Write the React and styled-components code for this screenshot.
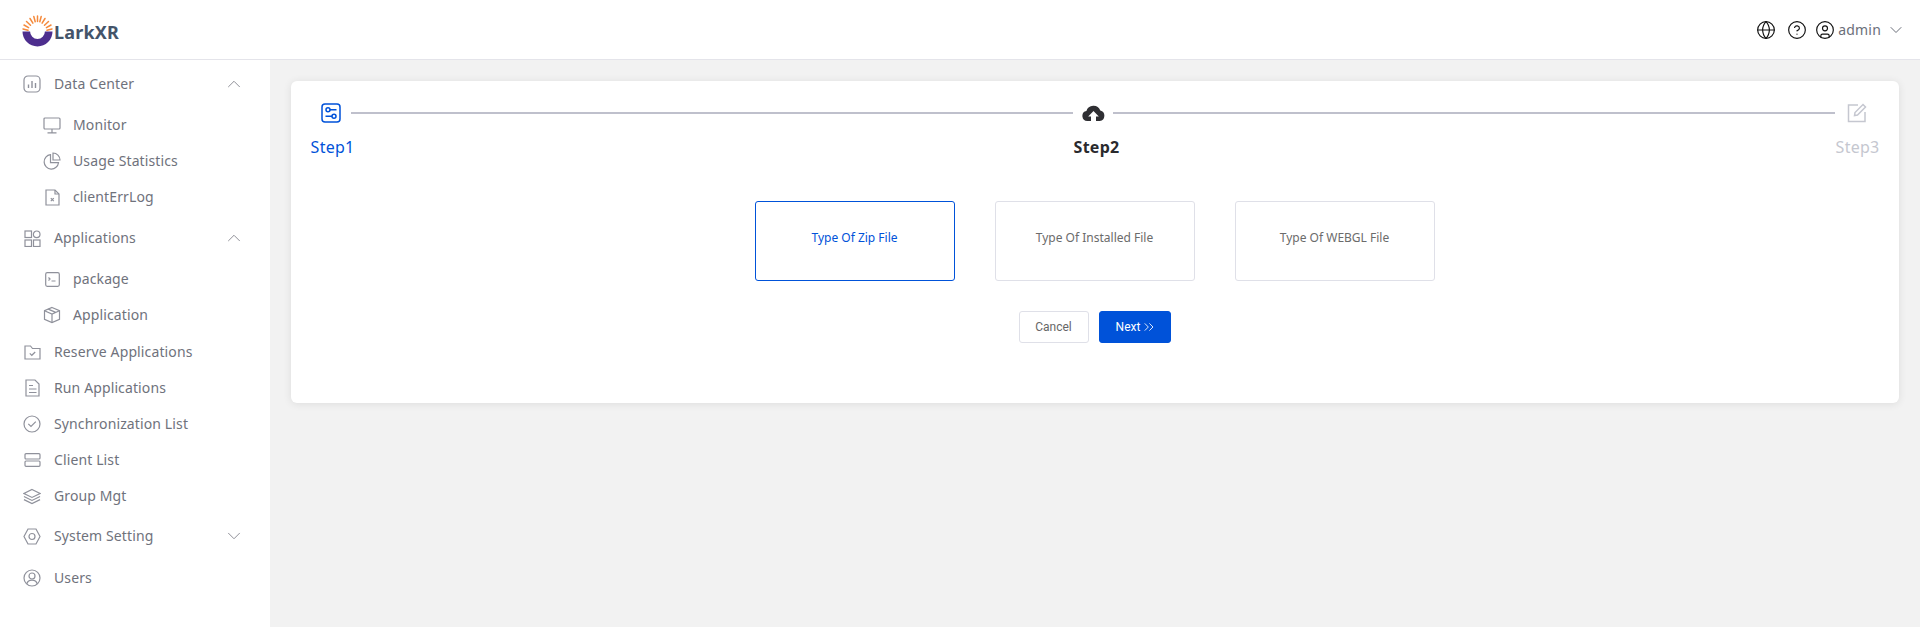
import React from "react";
import styled, { createGlobalStyle } from "styled-components";
import {
  CircleUser,
  ChevronUp,
  ChevronDown,
  Globe,
  CircleHelp,
  ChevronsRight,
} from "lucide-react";

const GlobalStyle = createGlobalStyle`
  html, body { margin: 0; padding: 0; height: 100%; background: #f2f2f2; }
  body { font-family: "Noto Sans", "Liberation Sans", sans-serif; }
  * { box-sizing: border-box; }
`;

const Page = styled.div`
  width: 1920px;
  height: 627px;
  display: flex;
  flex-direction: column;
  overflow: hidden;
`;

// 상단 헤더
const Header = styled.header`
  height: 60px;
  flex: none;
  display: flex;
  align-items: center;
  justify-content: space-between;
  background: #fff;
  border-bottom: 1px solid #e4e4ea;
  padding: 0 14px 0 22px;
`;

const Brand = styled.div`
  display: flex;
  align-items: center;
  padding-top: 3px;
`;

const BrandName = styled.span`
  font-size: 18px;
  font-weight: 700;
  letter-spacing: 0.2px;
  color: #44546a;
  margin-left: 1px;
  padding-top: 2px;
`;

const HeaderTools = styled.div`
  display: flex;
  align-items: center;
  color: #111;
`;

const ToolIcon = styled.span`
  display: flex;
  margin-right: ${(p) => p.$gap}px;
`;

const UserMenu = styled.div`
  display: flex;
  align-items: center;
  gap: 3px;
  font-size: 14px;
  letter-spacing: 0.2px;
  color: #6b6f7a;
  svg:first-child { color: #111; }
  svg:last-child { margin-left: 2px; }
`;

const Body = styled.div`
  flex: 1;
  display: flex;
  min-height: 0;
`;

const Sidebar = styled.nav`
  width: 270px;
  flex: none;
  background: #fff;
  padding-top: 1px;
`;

const MenuRow = styled.div`
  height: ${(p) => (p.$title ? 46 : 36)}px;
  margin-top: ${(p) => p.$gap || 0}px;
  display: flex;
  align-items: center;
  padding-left: ${(p) => (p.$sub ? 43 : 23)}px;
  padding-right: 25px;
  font-size: 14px;
  letter-spacing: 0.12px;
  color: #6f727c;
`;

const MenuIcon = styled.span`
  width: 18px;
  height: 18px;
  flex: none;
  display: flex;
  align-items: center;
  justify-content: center;
  color: #8f919b;
  margin-right: ${(p) => (p.$sub ? 12 : 13)}px;
`;

const MenuLabel = styled.span`
  flex: 1;
  padding-bottom: 2px;
`;

const Caret = styled.span`
  display: flex;
  color: #85878f;
`;

const Main = styled.main`
  flex: 1;
  padding: 21px 21px 0;
`;

const Card = styled.section`
  height: 322px;
  background: #fff;
  border-radius: 6px;
  box-shadow: 0 1px 8px rgba(0, 0, 0, 0.09);
  padding: 22px 21px 0 20px;
`;

const Steps = styled.div`
  display: flex;
  align-items: flex-start;
`;

const Step = styled.div`
  width: ${(p) => p.$width || 41}px;
  flex: none;
  display: flex;
  flex-direction: column;
  align-items: center;
  white-space: nowrap;
  font-size: 16px;
  letter-spacing: 0.25px;
  font-weight: ${(p) => (p.$current ? 700 : 400)};
  color: ${(p) => p.$color};
`;

const StepIcon = styled.div`
  height: 20px;
  display: flex;
  align-items: center;
  justify-content: center;
  margin-bottom: 14px;
  margin-right: ${(p) => p.$right || 0}px;
`;

const StepLabel = styled.div`
  line-height: 20px;
  margin-left: ${(p) => p.$left || 0}px;
`;

const Connector = styled.div`
  flex: 1;
  height: 2px;
  margin-top: 9px;
  background: #bfc0cc;
  margin-right: ${(p) => p.$right || 0}px;
`;

const Options = styled.div`
  display: flex;
  justify-content: center;
  gap: 40px;
  margin-top: 44px;
`;

const Option = styled.div`
  width: 200px;
  height: 80px;
  display: flex;
  align-items: center;
  justify-content: center;
  padding-bottom: 7px;
  border: 1px solid ${(p) => (p.$active ? "#0052d9" : "#dfe0e8")};
  border-radius: 3px;
  font-size: 12px;
  color: ${(p) => (p.$active ? "#0052d9" : "#6b6b6b")};
`;

const Actions = styled.div`
  display: flex;
  justify-content: center;
  gap: 10px;
  margin-top: 30px;
`;

const Button = styled.button`
  width: ${(p) => (p.$primary ? 72 : 70)}px;
  height: 32px;
  padding: 0 0 0 ${(p) => (p.$primary ? 4 : 0)}px;
  display: flex;
  align-items: center;
  justify-content: center;
  gap: 1px;
  font-family: Roboto, "Liberation Sans", sans-serif;
  font-size: 12px;
  border-radius: 3px;
  border: 1px solid ${(p) => (p.$primary ? "#0052d9" : "#dfe0e8")};
  background: ${(p) => (p.$primary ? "#0052d9" : "#fff")};
  color: ${(p) => (p.$primary ? "#fff" : "#666")};
`;

const Logo = () => (
  <svg width="31" height="32" viewBox="0 0 31 32">
    <path d="M0.500 16.500a15 15 0 0 0 30 0h-7.600a7.400 7.400 0 0 1-14.800 0z" fill="#4d2e8e" />
    <g stroke="#f58a3c" strokeWidth="1.500" strokeLinecap="round">
      <path d="M1 14l5 1.200M2 10l4.600 2.600M4.500 6.500l4 3.700M8 3.500l2.900 4.700M11.800 1.500l1.400 5.300M15.500 1v5.500M19.200 1.500l-1.400 5.300M23 3.500l-2.900 4.700M26.500 6.500l-4 3.700M29 10l-4.600 2.600M30 14l-5 1.200" />
    </g>
  </svg>
);

const line = { fill: "none", stroke: "currentColor", strokeWidth: 1.2 };

const ChartIcon = () => (
  <svg width="18" height="18" viewBox="0 0 18 18" {...line}>
    <rect x="1" y="1" width="16" height="16" rx="4" />
    <path d="M5.500 9.500v3.500M9 6v7M12.500 8v5" strokeWidth="1.400" />
  </svg>
);

const MonitorIcon = () => (
  <svg width="18" height="17" viewBox="0 0 18 17" {...line}>
    <rect x="1" y="1" width="16" height="11" rx="1" />
    <path d="M9 12v3.500M4.500 15.800h9" />
  </svg>
);

const PieIcon = () => (
  <svg width="18" height="18" viewBox="0 0 18 18" {...line}>
    <path d="M7.500 2.700a7.200 7.200 0 1 0 8 8H7.500z" />
    <path d="M10 1a7 7 0 0 1 7 7h-7z" />
  </svg>
);

const FileXIcon = () => (
  <svg width="15" height="17" viewBox="0 0 15 17" {...line}>
    <path d="M1 1h9l4 4v11H1z" />
    <path d="M10 1v4h4M5.800 9.200l3 3M8.800 9.200l-3 3" />
  </svg>
);

const GridIcon = () => (
  <svg width="17" height="17" viewBox="0 0 17 17" {...line}>
    <rect x="1" y="1" width="6.500" height="6.500" />
    <circle cx="12.700" cy="4.300" r="3.300" />
    <rect x="1" y="10" width="6.500" height="6.500" />
    <rect x="9.500" y="10" width="6.500" height="6.500" />
  </svg>
);

const ConsoleIcon = () => (
  <svg width="15" height="15" viewBox="0 0 15 15" {...line}>
    <rect x="0.700" y="0.700" width="13.600" height="13.600" rx="1.500" />
    <path d="M3.500 5.500l1.500 1.500-1.500 1.500M6.500 9h4" />
  </svg>
);

const CubeIcon = () => (
  <svg width="18" height="18" viewBox="0 0 18 18" {...line}>
    <path d="M9 1.500l7.500 3.200v8.600L9 16.500l-7.500-3.200V4.700z" />
    <path d="M1.500 4.700L9 8l7.500-3.300M9 8v8.500M5.200 3.100l7.500 3.300" />
  </svg>
);

const FolderIcon = () => (
  <svg width="17" height="15" viewBox="0 0 17 15" {...line}>
    <path d="M1 1h5.500l2 2.500H16v10.500H1z" />
    <path d="M5.800 8.300l2 2 3.400-3.300" />
  </svg>
);

const FileLinesIcon = () => (
  <svg width="15" height="18" viewBox="0 0 15 18" {...line}>
    <path d="M1 1h9l4 4v12H1z" />
    <path d="M4 6.500h4M4 10h7.500M4 13.500h7.500" />
  </svg>
);

const CheckIcon = () => (
  <svg width="18" height="18" viewBox="0 0 18 18" {...line}>
    <circle cx="9" cy="9" r="8" />
    <path d="M5.300 8.800l2.700 2.700 4.800-4.800" />
  </svg>
);

const ServerIcon = () => (
  <svg width="17" height="14" viewBox="0 0 17 14" {...line}>
    <rect x="1" y="0.700" width="15" height="5.300" rx="1" />
    <rect x="1" y="8" width="15" height="5.300" rx="1" />
  </svg>
);

const LayersIcon = () => (
  <svg width="19" height="17" viewBox="0 0 19 17" {...line}>
    <path d="M9.500 1L18 5.300 9.500 9.500 1 5.300z" />
    <path d="M1 8.500l8.500 4.200L18 8.500M1 11.800L9.500 16l8.500-4.200" />
  </svg>
);

const GearIcon = () => (
  <svg width="18" height="17" viewBox="0 0 18 17" {...line}>
    <path d="M5 1h8l4 7.500L13 16H5L1 8.500z" />
    <circle cx="9" cy="8.500" r="3" />
  </svg>
);

const UserIcon = () => (
  <svg width="18" height="18" viewBox="0 0 18 18" {...line}>
    <circle cx="9" cy="9" r="8" />
    <circle cx="9" cy="7" r="3" />
    <path d="M3.700 15c.8-2.500 2.800-3.800 5.300-3.800s4.500 1.300 5.300 3.800" />
  </svg>
);

const SlidersIcon = () => (
  <svg width="20" height="20" viewBox="0 0 20 20" fill="none" stroke="currentColor" strokeWidth="1.500">
    <rect x="1" y="1" width="18" height="18" rx="3" />
    <circle cx="7" cy="6.800" r="2" />
    <circle cx="13" cy="13.200" r="2" />
    <path d="M9 6.800h6.500M4.500 13.200H11" />
  </svg>
);

const EditIcon = () => (
  <svg width="20" height="20" viewBox="0 0 20 20" fill="none" stroke="currentColor" strokeWidth="1.500">
    <path d="M11 2H1.500v16.500H18V9" />
    <path d="M7.500 12.500l.5-3L16 1.500l2.500 2.500-8 8z" />
  </svg>
);

const CloudUpload = () => (
  <svg width="23" height="18" viewBox="0 0 23 18">
    <path
      d="M5.500 17A5 5 0 0 1 4.400 7.100 7.300 7.300 0 0 1 18.300 6.600 5.300 5.300 0 0 1 17.800 17h-3.800v-4.500h2.800L11.500 7l-5.300 5.500H9V17z"
      fill="#2f2f33"
    />
  </svg>
);

function App() {
  return (
    <Page>
      <GlobalStyle />
      <Header>
        <Brand>
          <Logo />
          <BrandName>LarkXR</BrandName>
        </Brand>
        <HeaderTools>
          <ToolIcon $gap={11}><Globe size={20} strokeWidth={1.4} /></ToolIcon>
          <ToolIcon $gap={8}><CircleHelp size={20} strokeWidth={1.4} /></ToolIcon>
          <UserMenu>
            <CircleUser size={20} strokeWidth={1.4} />
            admin
            <ChevronDown size={20} strokeWidth={1.2} />
          </UserMenu>
        </HeaderTools>
      </Header>
      <Body>
        <Sidebar>
          <MenuRow $title>
            <MenuIcon><ChartIcon /></MenuIcon>
            <MenuLabel>Data Center</MenuLabel>
            <Caret><ChevronUp size={22} strokeWidth={1} /></Caret>
          </MenuRow>
          <MenuRow $sub>
            <MenuIcon $sub><MonitorIcon /></MenuIcon>
            <MenuLabel>Monitor</MenuLabel>
          </MenuRow>
          <MenuRow $sub>
            <MenuIcon $sub><PieIcon /></MenuIcon>
            <MenuLabel>Usage Statistics</MenuLabel>
          </MenuRow>
          <MenuRow $sub>
            <MenuIcon $sub><FileXIcon /></MenuIcon>
            <MenuLabel>clientErrLog</MenuLabel>
          </MenuRow>
          <MenuRow $title>
            <MenuIcon><GridIcon /></MenuIcon>
            <MenuLabel>Applications</MenuLabel>
            <Caret><ChevronUp size={22} strokeWidth={1} /></Caret>
          </MenuRow>
          <MenuRow $sub>
            <MenuIcon $sub><ConsoleIcon /></MenuIcon>
            <MenuLabel>package</MenuLabel>
          </MenuRow>
          <MenuRow $sub>
            <MenuIcon $sub><CubeIcon /></MenuIcon>
            <MenuLabel>Application</MenuLabel>
          </MenuRow>
          <MenuRow $gap={1}>
            <MenuIcon><FolderIcon /></MenuIcon>
            <MenuLabel>Reserve Applications</MenuLabel>
          </MenuRow>
          <MenuRow>
            <MenuIcon><FileLinesIcon /></MenuIcon>
            <MenuLabel>Run Applications</MenuLabel>
          </MenuRow>
          <MenuRow>
            <MenuIcon><CheckIcon /></MenuIcon>
            <MenuLabel>Synchronization List</MenuLabel>
          </MenuRow>
          <MenuRow>
            <MenuIcon><ServerIcon /></MenuIcon>
            <MenuLabel>Client List</MenuLabel>
          </MenuRow>
          <MenuRow>
            <MenuIcon><LayersIcon /></MenuIcon>
            <MenuLabel>Group Mgt</MenuLabel>
          </MenuRow>
          <MenuRow $title $gap={-1}>
            <MenuIcon><GearIcon /></MenuIcon>
            <MenuLabel>System Setting</MenuLabel>
            <Caret><ChevronDown size={22} strokeWidth={1} /></Caret>
          </MenuRow>
          <MenuRow $title $gap={-4}>
            <MenuIcon><UserIcon /></MenuIcon>
            <MenuLabel>Users</MenuLabel>
          </MenuRow>
        </Sidebar>
        <Main>
          <Card>
            <Steps>
              <Step $width={40} $color="#0052d9">
                <StepIcon><SlidersIcon /></StepIcon>
                <StepLabel $left={3}>Step1</StepLabel>
              </Step>
              <Connector $right={-1} />
              <Step $current $color="#2a2a2e">
                <StepIcon $right={-1}><CloudUpload /></StepIcon>
                <StepLabel $left={8}>Step2</StepLabel>
              </Step>
              <Connector $right={2} />
              <Step $color="#c5c7d0">
                <StepIcon $right={2}><EditIcon /></StepIcon>
                <StepLabel>Step3</StepLabel>
              </Step>
            </Steps>
            <Options>
              <Option $active>Type Of Zip File</Option>
              <Option>Type Of Installed File</Option>
              <Option>Type Of WEBGL File</Option>
            </Options>
            <Actions>
              <Button>Cancel</Button>
              <Button $primary>
                Next
                <ChevronsRight size={16} strokeWidth={1.3} />
              </Button>
            </Actions>
          </Card>
        </Main>
      </Body>
    </Page>
  );
}

export default App;
